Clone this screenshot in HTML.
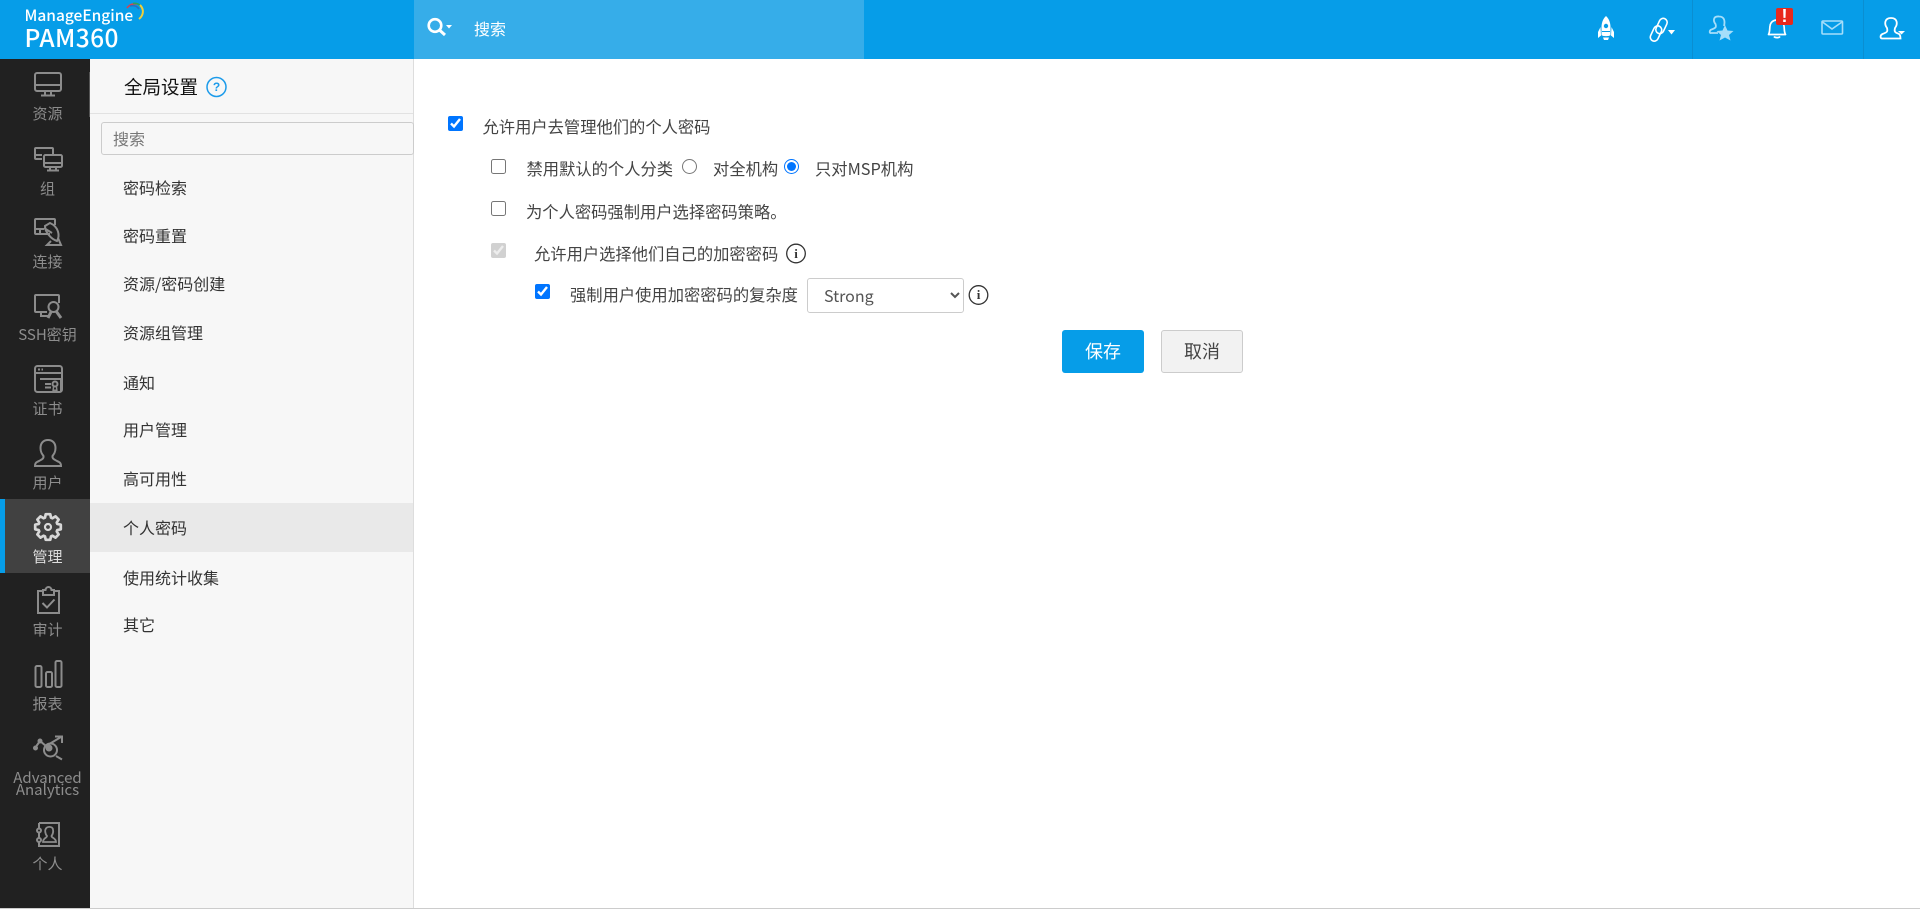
<!DOCTYPE html>
<html lang="zh"><head><meta charset="utf-8"><title>PAM360</title>
<style>
html,body{margin:0;padding:0;width:1920px;height:909px;overflow:hidden;background:#fff}
body{position:relative;font-family:"Noto Sans CJK SC","Liberation Sans",sans-serif;color:#333}
.a{position:absolute;white-space:nowrap}
.t{position:absolute;white-space:nowrap;height:20px;line-height:20px;font-size:16.300px;color:#444}
.m{position:absolute;left:123px;height:20px;line-height:20px;font-size:16px;color:#333;white-space:nowrap}
.s{position:absolute;left:0;width:95px;text-align:center;height:20px;line-height:20px;font-size:15px;color:#8d8d8d;white-space:nowrap}
input[type=checkbox],input[type=radio]{position:absolute;margin:0;width:15px;height:15px}
svg{position:absolute;left:0;top:0}
</style></head><body>
<div class="a" style="left:0;top:0;width:1920px;height:59px;background:#069de8"></div>
<div class="a" style="left:414px;top:0;width:450px;height:59px;background:#36ade9"></div>
<div class="a" style="left:0;top:59px;width:90px;height:849px;background:#212121"></div>
<div class="a" style="left:90px;top:59px;width:323px;height:849px;background:#f7f7f7"></div>
<div class="a" style="left:413px;top:59px;width:1px;height:849px;background:#ddd"></div>
<div class="a" style="left:0;top:908px;width:1920px;height:1px;background:#ccc"></div>
<div class="a" style="left:0;top:499px;width:90px;height:74px;background:#414141"></div>
<div class="a" style="left:0;top:499px;width:5px;height:74px;background:#069de8"></div>
<div class="a" style="left:90px;top:503px;width:323px;height:49px;background:#e9e9e9"></div>
<div class="a" style="left:90px;top:113px;width:323px;height:1px;background:#e2e2e2"></div>
<div class="a" style="left:89px;top:72px;width:1px;height:45px;background:#555"></div>

<div class="a" style="left:24.500px;top:5px;height:20px;line-height:20px;font-size:15.500px;font-weight:500;color:#fff">ManageEngine</div>
<div class="a" style="left:24.500px;top:22px;height:32px;line-height:32px;font-size:24.500px;font-weight:500;color:#fff;letter-spacing:.4px">PAM360</div>
<div class="t" style="left:474px;top:18px;font-size:16px;color:#fff">搜索</div>

<div class="a" style="left:124px;top:75px;height:24px;line-height:24px;font-size:18.500px;color:#111">全局设置</div>
<div class="a" style="left:101px;top:122px;width:311px;height:31px;border:1px solid #ccc;border-radius:3px;background:#f7f7f7"></div>
<div class="a" style="left:113px;top:128px;height:20px;line-height:20px;font-size:16px;color:#777">搜索</div>

<div class="m" style="top:177px">密码检索</div>
<div class="m" style="top:225px">密码重置</div>
<div class="m" style="top:273px">资源/密码创建</div>
<div class="m" style="top:322px">资源组管理</div>
<div class="m" style="top:372px">通知</div>
<div class="m" style="top:419px">用户管理</div>
<div class="m" style="top:468px">高可用性</div>
<div class="m" style="top:517px">个人密码</div>
<div class="m" style="top:567px">使用统计收集</div>
<div class="m" style="top:614px">其它</div>

<div class="s" style="top:104px">资源</div>
<div class="s" style="top:179px">组</div>
<div class="s" style="top:252px">连接</div>
<div class="s" style="top:325px">SSH密钥</div>
<div class="s" style="top:399px">证书</div>
<div class="s" style="top:473px">用户</div>
<div class="s" style="top:547px;color:#ddd">管理</div>
<div class="s" style="top:620px">审计</div>
<div class="s" style="top:694px">报表</div>
<div class="s" style="top:768px">Advanced</div>
<div class="s" style="top:780px">Analytics</div>
<div class="s" style="top:854px">个人</div>

<svg width="1920" height="909" viewBox="0 0 1920 909" fill="none" stroke="#8c8c8c" stroke-width="2">
<!-- logo arc -->
<g stroke-width="1.600"><path d="M127 8C130 4 134 3.500 137 4" stroke="#d8434e"/><path d="M133 3.500C136 3 139 4 141 6.500" stroke="#2fa35a"/><path d="M130 6C134 5 137 6 139 9" stroke="#2a6fc0"/><path d="M140 5C144 9 144 15 139 19" stroke="#f0cf3a" stroke-width="2"/></g>
<!-- resources -->
<rect x="35" y="73" width="26" height="18" rx="2"/><path d="M35 85H61M45 91V95M51 91V95M41 95.500H55"/>
<!-- group -->
<path d="M42 159H36a1 1 0 0 1-1-1V149a1 1 0 0 1 1-1H52a1 1 0 0 1 1 1V154"/><path d="M35 155H42"/><rect x="44" y="155" width="18" height="12" rx="1.500"/><path d="M44 163H62M50 167V170M56 167V170M47 170.500H59"/>
<!-- connect -->
<path d="M50 234H36a1 1 0 0 1-1-1V220a1 1 0 0 1 1-1H54a1 1 0 0 1 1 1V225"/><path d="M35 229H44M40 234V229"/><path d="M50 223C59 227 60 236 57 241C51 239 45 232 45 226Z"/><path d="M52 233L44 228M51 241L47 245H61L58 238"/>
<!-- ssh -->
<path d="M47 312H36a1 1 0 0 1-1-1V296a1 1 0 0 1 1-1H58a1 1 0 0 1 1 1V303"/><path d="M41 312V316H48"/><circle cx="53.500" cy="307" r="5"/><path d="M51 312L48 318M56 311L61 318" stroke-width="3"/>
<!-- cert -->
<rect x="35" y="366" width="27" height="26" rx="2.500"/><path d="M35 373H62"/><path d="M38 369.500H43" stroke-dasharray="2 1.500"/><path d="M40 379H61V392M45 384H51M45 387.500H51"/><circle cx="55" cy="384" r="2.500"/><path d="M53.500 387L53 391L55 390L57 391L56.500 387" stroke-width="1.400"/>
<!-- user -->
<path d="M48 440C43 440 40.500 443.500 40.500 448C40.500 452 42 454 43.500 456C44 459 41 460 37 462C35 463 35 465 35 466H61C61 465 61 463 59 462C55 460 52 459 52.500 456C54 454 55.500 452 55.500 448C55.500 443.500 53 440 48 440Z"/>
<!-- gear -->
<g stroke="#d8d8d8" transform="translate(48 527)"><path d="M-3.030 -9.320L-2.260 -12.800L2.260 -12.800L3.030 -9.320L4.450 -8.730L7.460 -10.650L10.650 -7.460L8.730 -4.450L9.320 -3.030L12.800 -2.260L12.800 2.260L9.320 3.030L8.730 4.450L10.650 7.460L7.460 10.650L4.450 8.730L3.030 9.320L2.260 12.800L-2.260 12.800L-3.030 9.320L-4.450 8.730L-7.460 10.650L-10.650 7.460L-8.730 4.450L-9.320 3.030L-12.800 2.260L-12.800 -2.260L-9.320 -3.030L-8.730 -4.450L-10.650 -7.460L-7.460 -10.650L-4.450 -8.730Z" stroke-width="2.700" stroke-linejoin="round"/><circle cx="0" cy="0" r="3" stroke-width="2.200"/></g>
<!-- audit -->
<path d="M43 591H38V613H59V591H54M43 595V590H45.500C46 586 51 586 51.500 590H54V595Z"/><path d="M42.500 603L47 607.500L54.500 599.500" stroke="#909090"/>
<!-- report -->
<rect x="35.500" y="666" width="6" height="21" rx="1.500"/><rect x="46" y="672" width="6" height="15" rx="1.500"/><rect x="55.500" y="661" width="6" height="26" rx="1.500"/>
<!-- analytics -->
<path d="M35 748L40 741L46 746L61 737M55 736.500H62V743M56 756L62 759.500"/><circle cx="50.500" cy="750" r="6.500"/><circle cx="35.500" cy="748" r="1.500" fill="#8c8c8c"/><circle cx="40" cy="741" r="1.500" fill="#8c8c8c"/><circle cx="49" cy="748" r="2.500" fill="#8c8c8c"/>
<!-- personal -->
<path d="M39 823H59V846H39V842M39 823V828M39 833V838"/><circle cx="39" cy="830.500" r="2"/><circle cx="39" cy="840" r="2"/><path d="M43 842C43 838 47 838 47 836C45 834 45 830 45.500 829.500C46.500 826 52.500 826 53 829.500C53.500 832 53 834 51.500 836C51.500 838 56 838 56 842Z" stroke-width="1.800"/>
<!-- help icon -->
<circle cx="216.500" cy="87" r="9.500" stroke="#1c9bea" stroke-width="1.500"/>
<!-- search icon -->
<g stroke="#fff"><circle cx="435" cy="25.500" r="6.300" stroke-width="2.600"/><path d="M440 30.500L445 35" stroke-width="3"/></g>
<path d="M446 25H452L449 28.500Z" fill="#fff" stroke="none"/>
<!-- rocket -->
<g fill="#fff" stroke="none"><path d="M1606 16C1609.500 19 1610.500 24 1610.500 27V35C1610 36.500 1602 36.500 1601.500 35V27C1601.500 24 1602.500 19 1606 16Z"/><path d="M1600.500 27L1598 32V38L1601 35.500Z M1611.500 27L1614 32V38L1611 35.500Z M1603 37.500H1609L1608 40H1604Z"/></g><circle cx="1606" cy="26" r="2.200" fill="#069de8" stroke="none"/><path d="M1602 31.500H1610" stroke="#069de8" stroke-width="1"/>
<!-- link -->
<g stroke="#fff" stroke-width="1.600"><rect x="1657.500" y="18" width="8" height="16" rx="4" transform="rotate(25 1661.500 26)"/><rect x="1652" y="25.500" width="8" height="16" rx="4" transform="rotate(25 1656 33.500)"/></g>
<path d="M1668 30H1675L1671.500 34.500Z" fill="#fff" stroke="none"/>
<!-- dividers -->
<path d="M1692.500 0V59M1863.500 0V59" stroke="#0a8ed1" stroke-width="1"/>
<!-- user star -->
<path d="M1718 33H1711C1709 33.500 1709.500 30 1711.500 29.500C1716 28 1716.500 27 1715.500 24C1713 21 1713 16 1719 16.500C1725 16.500 1725 22 1724 26" stroke="#a5defa" stroke-width="1.800"/>
<path d="M1725 25L1727.500 30.500L1733.500 31L1729 35L1730.500 40.500L1725 37.500L1719.500 40.500L1721 35L1716.500 31L1722.500 30.500Z" fill="#a5defa" stroke="none"/>
<!-- bell -->
<path d="M1768.500 34.500C1770 32 1769.500 29 1770 26C1770.500 22.500 1773 20 1777 20C1781 20 1783.500 22.500 1784 26C1784.500 29 1784 32 1785.500 34.500Z" stroke="#fff" stroke-width="1.700" stroke-linejoin="round"/><path d="M1774 36.500C1775 38 1779 38 1780 36.500" stroke="#fff" stroke-width="1.700"/>
<!-- mail -->
<rect x="1822" y="21" width="20.500" height="13" rx="1" stroke="#a5defa" stroke-width="1.600"/><path d="M1822.500 22L1832 29L1842 22" stroke="#a5defa" stroke-width="1.600"/>
<!-- user menu -->
<path d="M1888 38.500H1882C1880 38.500 1880 35 1882.500 34C1887 32.500 1888 31.500 1887 28C1884 24 1884.500 18 1891 18C1897.500 18 1898 24 1895 28C1894 31.500 1895 32.500 1898 33.500C1900 34 1900.500 36 1900.500 38.500Z" stroke="#fff" stroke-width="1.800"/>
<path d="M1898 31H1905L1901.500 34.500Z" fill="#fff" stroke="none"/>
<!-- info icons -->
<g stroke="#333" stroke-width="1.300"><circle cx="796" cy="253.500" r="9.300"/><circle cx="978.500" cy="295" r="9.300"/></g>
</svg>
<div class="a" style="left:207px;top:77px;width:19px;height:20px;line-height:20px;text-align:center;font-size:12px;font-weight:700;color:#1c9bea;font-family:'Liberation Sans',sans-serif">?</div>
<div class="a" style="left:1776px;top:8px;width:17px;height:17px;background:#e8291c;border-radius:2px;color:#fff;text-align:center;font:700 18px/17px 'Liberation Sans',sans-serif">!</div>
<div class="a" style="left:786px;top:243.500px;width:20px;height:20px;text-align:center;font:700 13px/20px 'Liberation Serif',serif;color:#333">i</div>
<div class="a" style="left:968.500px;top:285px;width:20px;height:20px;text-align:center;font:700 13px/20px 'Liberation Serif',serif;color:#333">i</div>

<input type="checkbox" checked style="left:448px;top:116px">
<div class="t" style="left:482.500px;top:116px">允许用户去管理他们的个人密码</div>
<input type="checkbox" style="left:491px;top:159px">
<div class="t" style="left:526.500px;top:158px">禁用默认的个人分类</div>
<input type="radio" name="r" style="left:682px;top:159px">
<div class="t" style="left:713px;top:158px">对全机构</div>
<input type="radio" name="r" checked style="left:784px;top:159px">
<div class="t" style="left:815px;top:158px">只对MSP机构</div>
<input type="checkbox" style="left:491px;top:201px">
<div class="t" style="left:526px;top:201px">为个人密码强制用户选择密码策略。</div>
<input type="checkbox" checked disabled style="left:491px;top:243px">
<div class="t" style="left:534px;top:243px">允许用户选择他们自己的加密密码</div>
<input type="checkbox" checked style="left:535px;top:284px">
<div class="t" style="left:570px;top:284px">强制用户使用加密密码的复杂度</div>
<select style="position:absolute;left:807px;top:278px;width:157px;height:35px;border:1px solid #ccc;border-radius:3px;background:#fff;font-family:'Noto Sans CJK SC',sans-serif;font-size:16px;color:#555;padding:0 0 2px 12px;margin:0"><option>Strong</option></select>
<div class="a" style="left:1062px;top:330px;width:82px;height:43px;background:#069de8;border-radius:3px;color:#fff;text-align:center;line-height:42px;font-size:18px">保存</div>
<div class="a" style="left:1161px;top:330px;width:80px;height:41px;background:#f2f2f2;border:1px solid #ccc;border-radius:3px;color:#444;text-align:center;line-height:40px;font-size:18px">取消</div>
</body></html>
